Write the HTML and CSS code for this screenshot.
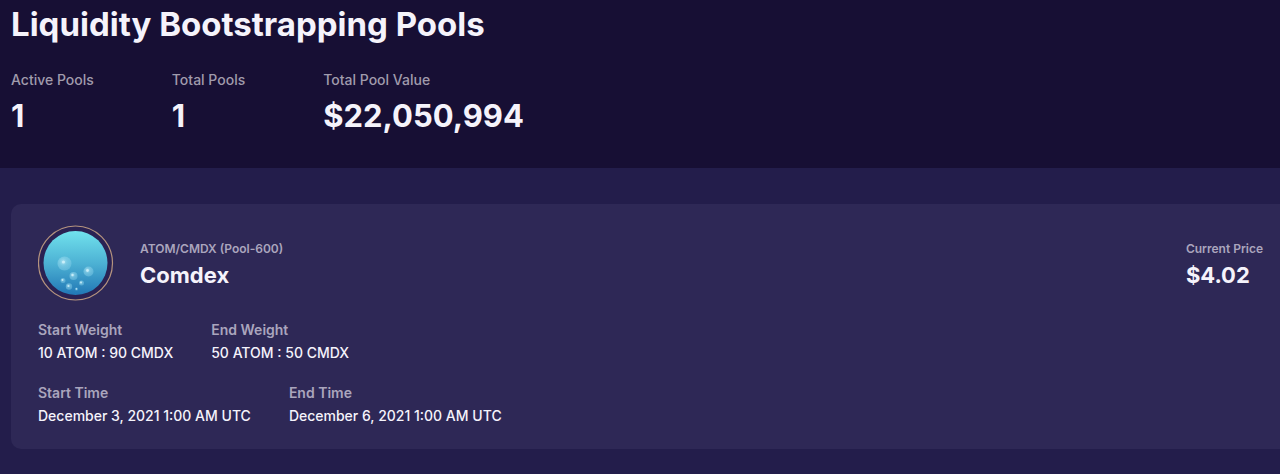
FILE: index.html
```html
<!DOCTYPE html>
<html lang="en">
<head>
    <meta charset="UTF-8">
    <meta name="viewport" content="width=device-width, initial-scale=1.0">
    <title>Liquidity Bootstrapping Pools</title>
    <link rel="stylesheet" href="styles.css">
</head>
<body>
    <header class="overview">
        <h1>Liquidity Bootstrapping Pools</h1>
        <dl class="stats">
            <div class="stat">
                <dt>Active Pools</dt>
                <dd>1</dd>
            </div>
            <div class="stat">
                <dt>Total Pools</dt>
                <dd>1</dd>
            </div>
            <div class="stat">
                <dt>Total Pool Value</dt>
                <dd>$22,050,994</dd>
            </div>
        </dl>
    </header>

    <main class="pools">
        <article class="pool-card">
            <div class="pool-head">
                <svg class="pool-icon" viewBox="0 0 76 76" aria-hidden="true">
                    <defs>
                        <linearGradient id="water" x1="0" y1="0" x2="0" y2="1">
                            <stop offset="0" stop-color="#71e2ed"/>
                            <stop offset="0.5" stop-color="#4db2d4"/>
                            <stop offset="1" stop-color="#2177b5"/>
                        </linearGradient>
                        <radialGradient id="bubble" cx="0.4" cy="0.38" r="0.6">
                            <stop offset="0" stop-color="#c9f0fa" stop-opacity="0.75"/>
                            <stop offset="0.5" stop-color="#9cdcf0" stop-opacity="0.5"/>
                            <stop offset="1" stop-color="#8fd6ee" stop-opacity="0.4"/>
                        </radialGradient>
                    </defs>
                    <circle cx="37.5" cy="38" r="37" fill="#2a2253" stroke="#b5947f" stroke-width="1.2"/>
                    <circle cx="37.5" cy="38" r="32" fill="url(#water)"/>
                    <g fill="url(#bubble)">
                        <circle cx="26.5" cy="38.5" r="7"/>
                        <circle cx="50.5" cy="46.5" r="5"/>
                        <circle cx="35.5" cy="51" r="4"/>
                        <circle cx="25" cy="55.5" r="2.5"/>
                        <circle cx="43.5" cy="58" r="2.5"/>
                        <circle cx="31" cy="61.5" r="3.2"/>
                        <circle cx="38.5" cy="64" r="1.5"/>
                    </g>
                    <g fill="#dcf7fd" fill-opacity="0.7">
                        <circle cx="25.5" cy="37" r="1.6"/>
                        <circle cx="49.5" cy="45.5" r="1.4"/>
                        <circle cx="34.5" cy="50" r="1.2"/>
                        <circle cx="24.5" cy="55" r="0.9"/>
                        <circle cx="43" cy="57.5" r="0.9"/>
                        <circle cx="30.5" cy="61" r="1"/>
                        <circle cx="38.5" cy="64" r="0.7"/>
                    </g>
                </svg>
                <div class="pool-name">
                    <p class="label">ATOM/CMDX (Pool-600)</p>
                    <h2>Comdex</h2>
                </div>
                <div class="pool-price">
                    <p class="label">Current Price</p>
                    <p class="price">$4.02</p>
                </div>
            </div>

            <dl class="details">
                <div>
                    <dt>Start Weight</dt>
                    <dd>10 ATOM : 90 CMDX</dd>
                </div>
                <div>
                    <dt>End Weight</dt>
                    <dd>50 ATOM : 50 CMDX</dd>
                </div>
            </dl>
            <dl class="details">
                <div>
                    <dt>Start Time</dt>
                    <dd>December 3, 2021 1:00 AM UTC</dd>
                </div>
                <div>
                    <dt>End Time</dt>
                    <dd>December 6, 2021 1:00 AM UTC</dd>
                </div>
            </dl>
        </article>
    </main>
</body>
</html>
```
FILE: styles.css
```css
* {
    box-sizing: border-box;
}

body {
    margin: 0;
    background-color: #231d4b;
    color: #f5f3fb;
    font-family: Inter, sans-serif;
    font-size: 14px;
    line-height: 20px;
}

h1, h2, p, dl, dd {
    margin: 0;
}

/* Page header */
.overview {
    padding: 0 11px 32px;
    background-color: #170f34;
}

h1 {
    font-size: 33px;
    font-weight: 700;
    line-height: 48px;
}

.stats {
    display: flex;
    flex-wrap: wrap;
    gap: 20px 78px;
    padding-top: 22px;
}

.stat dt {
    color: #a09bac;
    font-weight: 500;
}

.stat dd {
    padding-top: 6px;
    font-size: 31px;
    font-weight: 700;
    line-height: 40px;
}

/* Pool list */
.pools {
    padding: 36px 0 25px 11px;
}

.pool-card {
    padding: 21px 17px 21px 27px;
    background-color: #2e2856;
    border-radius: 10px 0 0 10px;
}

.pool-head {
    display: flex;
    align-items: center;
    margin-bottom: 17px;
}

.pool-icon {
    flex: none;
    width: 76px;
    height: 76px;
    margin-right: 26px;
}

.pool-name, .pool-price {
    padding-top: 4px;
}

.pool-price {
    margin-left: auto;
}

.label {
    color: #aaa5bd;
    font-size: 12px;
    font-weight: 600;
}

h2, .price {
    font-size: 22px;
    font-weight: 700;
    line-height: 32px;
}

.details {
    display: flex;
    flex-wrap: wrap;
    gap: 16px 38px;
}

.details + .details {
    margin-top: 16px;
}

.details dt {
    color: #aaa5bd;
    font-weight: 600;
    line-height: 23px;
}

.details dd {
    font-weight: 500;
    line-height: 24px;
}
```
